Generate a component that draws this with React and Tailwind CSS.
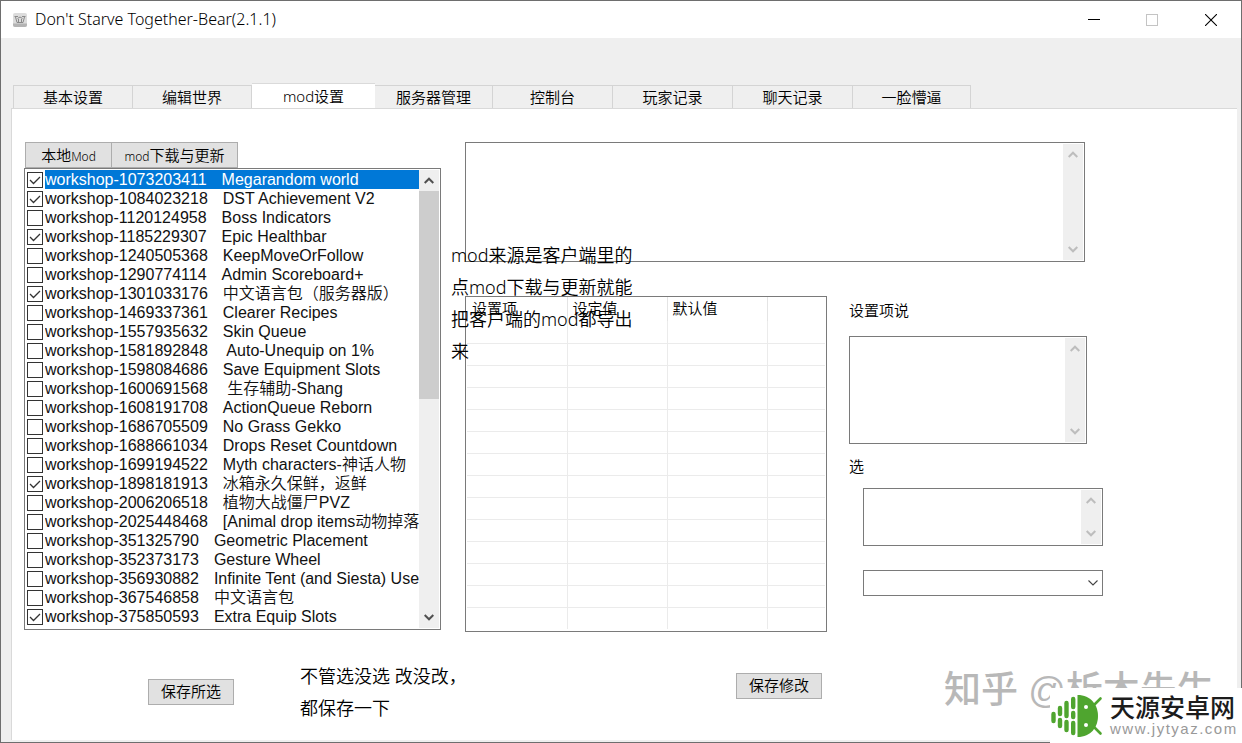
import { useState } from "react";

const TABS = [
  { label: "基本设置", width: "w-[120px]" },
  { label: "编辑世界", width: "w-[119px]" },
  { label: "mod设置", width: "w-[123px]" },
  { label: "服务器管理", width: "w-[118px]" },
  { label: "控制台", width: "w-[120px]" },
  { label: "玩家记录", width: "w-[120px]" },
  { label: "聊天记录", width: "w-[120px]" },
  { label: "一脸懵逼", width: "w-[118px]" },
];

const MODS = [
  ["1073203411", "Megarandom world", true],
  ["1084023218", "DST Achievement V2", true],
  ["1120124958", "Boss Indicators", false],
  ["1185229307", "Epic Healthbar", true],
  ["1240505368", "KeepMoveOrFollow", false],
  ["1290774114", "Admin Scoreboard+", false],
  ["1301033176", "中文语言包（服务器版）", true],
  ["1469337361", "Clearer Recipes", false],
  ["1557935632", "Skin Queue", false],
  ["1581892848", " Auto-Unequip on 1%", false],
  ["1598084686", "Save Equipment Slots", false],
  ["1600691568", " 生存辅助-Shang", false],
  ["1608191708", "ActionQueue Reborn", false],
  ["1686705509", "No Grass Gekko", false],
  ["1688661034", "Drops Reset Countdown", false],
  ["1699194522", "Myth characters-神话人物", false],
  ["1898181913", "冰箱永久保鲜，返鲜", true],
  ["2006206518", "植物大战僵尸PVZ", false],
  ["2025448468", "[Animal drop items动物掉落", false],
  ["351325790", "Geometric Placement", false],
  ["352373173", "Gesture Wheel", false],
  ["356930882", "Infinite Tent (and Siesta) Uses", false],
  ["367546858", "中文语言包", false],
  ["375850593", "Extra Equip Slots", true],
];

const EMPTY_ROWS = Array.from({ length: 14 }, (_, i) => i);

function Chevron({ up = false }) {
  return (
    <svg viewBox="0 0 10 7" className="h-[7px] w-[10px]" fill="none" stroke="currentColor" strokeWidth="2">
      <path d={up ? "M0.7 6 L5 1.7 L9.3 6" : "M0.7 1 L5 5.3 L9.3 1"} />
    </svg>
  );
}

function ScrollBar({ active = false }) {
  return (
    <div className={`flex w-5 shrink-0 flex-col items-center bg-[#efefef] ${active ? "text-[#505050]" : "text-[#bdbdbd]"}`}>
      <button type="button" aria-label="向上滚动" className="flex h-[21px] w-full items-center justify-center">
        <Chevron up />
      </button>
      <div className="w-full flex-1">{active && <div className="h-[208px] bg-[#cdcdcd]" />}</div>
      <button type="button" aria-label="向下滚动" className="flex h-[21px] w-full items-center justify-center">
        <Chevron />
      </button>
    </div>
  );
}

function ScrollBox({ label, className }) {
  return (
    <div className={`flex border border-[#7a7a7a] bg-white p-px ${className}`}>
      <textarea aria-label={label} className="min-w-0 flex-1 resize-none bg-transparent px-1 outline-none" />
      <ScrollBar />
    </div>
  );
}

function ModRow({ id, name, checked, selected, onToggle }) {
  return (
    <li>
      <label className="flex h-[19px] items-center gap-[2px]">
        <span className="relative flex size-4 shrink-0">
          <input
            type="checkbox"
            checked={checked}
            onChange={onToggle}
            className="size-4 appearance-none border border-[#333] bg-white"
          />
          {checked && (
            <svg viewBox="0 0 16 16" className="pointer-events-none absolute inset-0 size-4" fill="none" stroke="#333" strokeWidth="1.3">
              <path d="M3 8 L6.5 11.5 L13 5" />
            </svg>
          )}
        </span>
        <span
          className={`flex min-w-0 flex-1 gap-[15px] overflow-hidden whitespace-pre text-base leading-[19px] ${
            selected ? "bg-[#0078d7] text-white" : "text-[#111]"
          }`}
        >
          <span>workshop-{id}</span>
          <span>{name}</span>
        </span>
      </label>
    </li>
  );
}

function PushButton({ children, className = "" }) {
  return (
    <button type="button" className={`h-[26px] shrink-0 border border-[#adadad] bg-[#e1e1e1] text-[15px] leading-5 ${className}`}>
      {children}
    </button>
  );
}

function TitleBar() {
  return (
    <header className="flex h-[37px] items-center bg-white pl-3">
      <svg viewBox="0 0 14 14" className="size-[14px]">
        <rect width="14" height="14" rx="2" fill="#dcdcdc" />
        <path d="M0 10.5 H14 V12 A2 2 0 0 1 12 14 H2 A2 2 0 0 1 0 12 Z" fill="#b4b4b4" />
        <path d="M1.5 3.5 H5 M9 3.5 H12.5 M2.5 4 L4 9.5 H10 L11.5 4 M4.5 5.5 L7 4 L9.5 5.5" fill="none" stroke="#8a8a8a" />
        <path d="M5.5 6 V9 M8.5 6 V9" stroke="#8a8a8a" strokeWidth="1" />
      </svg>
      <h1 className="ml-2 flex-1 pb-px font-['Noto_Sans','Noto_Sans_CJK_SC',sans-serif] text-base leading-5 text-black">
        Don't Starve Together-Bear(2.1.1)
      </h1>
      <button type="button" aria-label="最小化" className="flex h-full w-[58px] items-center justify-center">
        <svg viewBox="0 0 12 12" className="size-3"><path d="M0 5.5 H12" stroke="#000" /></svg>
      </button>
      <button type="button" aria-label="最大化" disabled className="flex h-full w-[58px] items-center justify-center">
        <svg viewBox="0 0 12 12" className="size-3"><rect x="0.5" y="0.5" width="11" height="11" fill="none" stroke="#c4c4c4" /></svg>
      </button>
      <button type="button" aria-label="关闭" className="flex h-full w-[60px] items-center justify-center">
        <svg viewBox="0 0 12 12" className="size-3"><path d="M0 0 L12 12 M12 0 L0 12" stroke="#000" strokeWidth="1.1" /></svg>
      </button>
    </header>
  );
}

function SettingsTable() {
  return (
    <div className="h-[336px] w-[362px] shrink-0 border border-[#7a7a7a] bg-white px-px">
      <table className="w-full table-fixed border-collapse text-left text-[15px]">
        <colgroup>
          <col className="w-[100px]" />
          <col className="w-[100px]" />
          <col className="w-[100px]" />
          <col />
        </colgroup>
        <thead>
          <tr className="h-6">
            {["设置项", "设定值", "默认值"].map((h) => (
              <th key={h} scope="col" className="border-r border-[#e4e4e4] p-0 pl-[5px] leading-5 font-[350]">{h}</th>
            ))}
            <td />
          </tr>
        </thead>
        <tbody>
          {EMPTY_ROWS.map((i) => (
            <tr key={i} className="h-[22px] border-b border-[#ebebeb] last:border-b-0">
              <td className="border-r border-[#ebebeb] p-0" />
              <td className="border-r border-[#ebebeb] p-0" />
              <td className="border-r border-[#ebebeb] p-0" />
              <td className="p-0" />
            </tr>
          ))}
        </tbody>
      </table>
    </div>
  );
}

function Watermark() {
  return (
    <div className="pointer-events-none absolute -right-px -bottom-px h-[76px] w-[300px] overflow-hidden">
      <p className="absolute top-0 left-[2px] text-[37px] leading-[48px] font-medium whitespace-nowrap text-[#b8b8b8]">知乎 @析木先生</p>
      <div className="absolute right-0 bottom-0 flex h-[55px] w-[192px] items-center bg-white">
        <svg viewBox="0 0 54 44" className="h-[44px] w-[54px] shrink-0">
          <g stroke="#4fa52f" strokeWidth="4.4" strokeLinecap="round" fill="none">
            <path d="M3.5 20 V27" />
            <path d="M10 14 V20 M10 26 V32" />
            <path d="M16.5 9 V22 M16.5 28 V36" />
            <path d="M23.2 5 V13 M23.2 19 V23 M23.2 29 V39" />
          </g>
          <path d="M27.5 1 C41 1 48 11 48 22 C48 33 41 43 27.5 43 Z" fill="#4fa52f" />
          <path d="M44 11 L50.5 4.5 M44 33 L50.5 39.5" stroke="#4fa52f" strokeWidth="2.6" strokeLinecap="round" />
          <circle cx="36" cy="13" r="2" fill="#fff" />
          <circle cx="36" cy="31" r="2" fill="#fff" />
        </svg>
        <div className="ml-[6px] whitespace-nowrap">
          <p className="text-[25px] leading-[26px] font-medium text-[#1c1c1c]">天源安卓网</p>
          <p className="font-['Liberation_Sans',sans-serif] text-[15px] leading-4 tracking-widest text-[#999]">www.jytyaz.com</p>
        </div>
      </div>
    </div>
  );
}

export default function App() {
  const [tab, setTab] = useState(2);
  const [checked, setChecked] = useState(MODS.map((m) => m[2]));

  return (
    <div className="relative flex min-h-screen flex-col border border-[#6e6e6e] bg-[#efefef] font-['Liberation_Sans','Noto_Sans_CJK_SC',sans-serif] font-[350] text-black">
      <TitleBar />

      <nav role="tablist" className="mt-[45px] ml-3 flex items-end font-['Noto_Sans','Noto_Sans_CJK_SC',sans-serif] text-[15px]">
        {TABS.map((t, i) => (
          <button
            key={t.label}
            type="button"
            role="tab"
            aria-selected={tab === i}
            onClick={() => setTab(i)}
            className={`${t.width} ${
              tab === i
                ? "-mb-px h-[26px] border-t border-[#dadada] bg-white pb-px"
                : "h-[23px] border-t border-r border-[#d4d4d4] first:border-l"
            } leading-5`}
          >
            {t.label}
          </button>
        ))}
      </nav>

      <main className="mr-1 mb-[2px] ml-[10px] flex flex-1 gap-6 border-t border-l border-[#d9d9d9] bg-white pt-[33px] pl-3">
        <section className="flex w-[417px] shrink-0 flex-col">
          <div className="flex pl-px font-['Noto_Sans','Noto_Sans_CJK_SC',sans-serif]">
            <PushButton className="w-[87px]">
              本地<span className="text-xs">Mod</span>
            </PushButton>
            <PushButton className="-ml-px w-[127px]">
              <span className="text-xs">mod</span>下载与更新
            </PushButton>
          </div>
          <div className="flex h-[462px] border border-[#7a7a7a] bg-white p-px">
            <ul className="min-w-0 flex-1 pl-px">
              {MODS.map(([id, name], i) => (
                <ModRow
                  key={id}
                  id={id}
                  name={name}
                  checked={checked[i]}
                  selected={i === 0}
                  onToggle={() => setChecked(checked.map((c, j) => (j === i ? !c : c)))}
                />
              ))}
            </ul>
            <ScrollBar active />
          </div>
          <div className="mt-[30px] flex items-center gap-[66px] pl-[124px]">
            <PushButton className="w-[86px]">保存所选</PushButton>
            <p className="font-['Noto_Sans','Noto_Sans_CJK_SC',sans-serif] text-[18px] leading-8 whitespace-nowrap">
              不管选没选 改没改，
              <br />
              都保存一下
            </p>
          </div>
        </section>

        <section className="relative min-w-0 flex-1">
          <ScrollBox label="mod说明" className="h-[120px] w-full max-w-[620px]" />
          <div className="mt-[34px] flex gap-[22px]">
            <div className="flex flex-col">
              <SettingsTable />
              <PushButton className="mt-[41px] mr-[5px] w-[86px] self-end">保存修改</PushButton>
            </div>
            <div className="flex w-[254px] flex-col text-[15px] leading-5">
              <p className="mt-[5px]">设置项说</p>
              <ScrollBox label="设置项说" className="mt-[15px] h-[108px] w-[238px]" />
              <p className="mt-[13px]">选</p>
              <ScrollBox label="选" className="mt-[11px] ml-[14px] h-[58px]" />
              <div className="relative mt-6 ml-[14px] flex">
                <select aria-label="选项" className="h-[26px] w-full appearance-none border border-[#7a7a7a] bg-white px-1" />
                <svg viewBox="0 0 10 6" className="pointer-events-none absolute top-[10px] right-[5px] h-[6px] w-[10px]" fill="none" stroke="#444" strokeWidth="1.1">
                  <path d="M0.5 0.5 L5 5 L9.5 0.5" />
                </svg>
              </div>
            </div>
          </div>
          <p className="absolute top-[97px] -left-[14px] w-[190px] font-['Noto_Sans','Noto_Sans_CJK_SC',sans-serif] text-[18px] leading-8">
            mod来源是客户端里的点mod下载与更新就能把客户端的mod都导出来
          </p>
        </section>
      </main>

      <Watermark />
    </div>
  );
}
